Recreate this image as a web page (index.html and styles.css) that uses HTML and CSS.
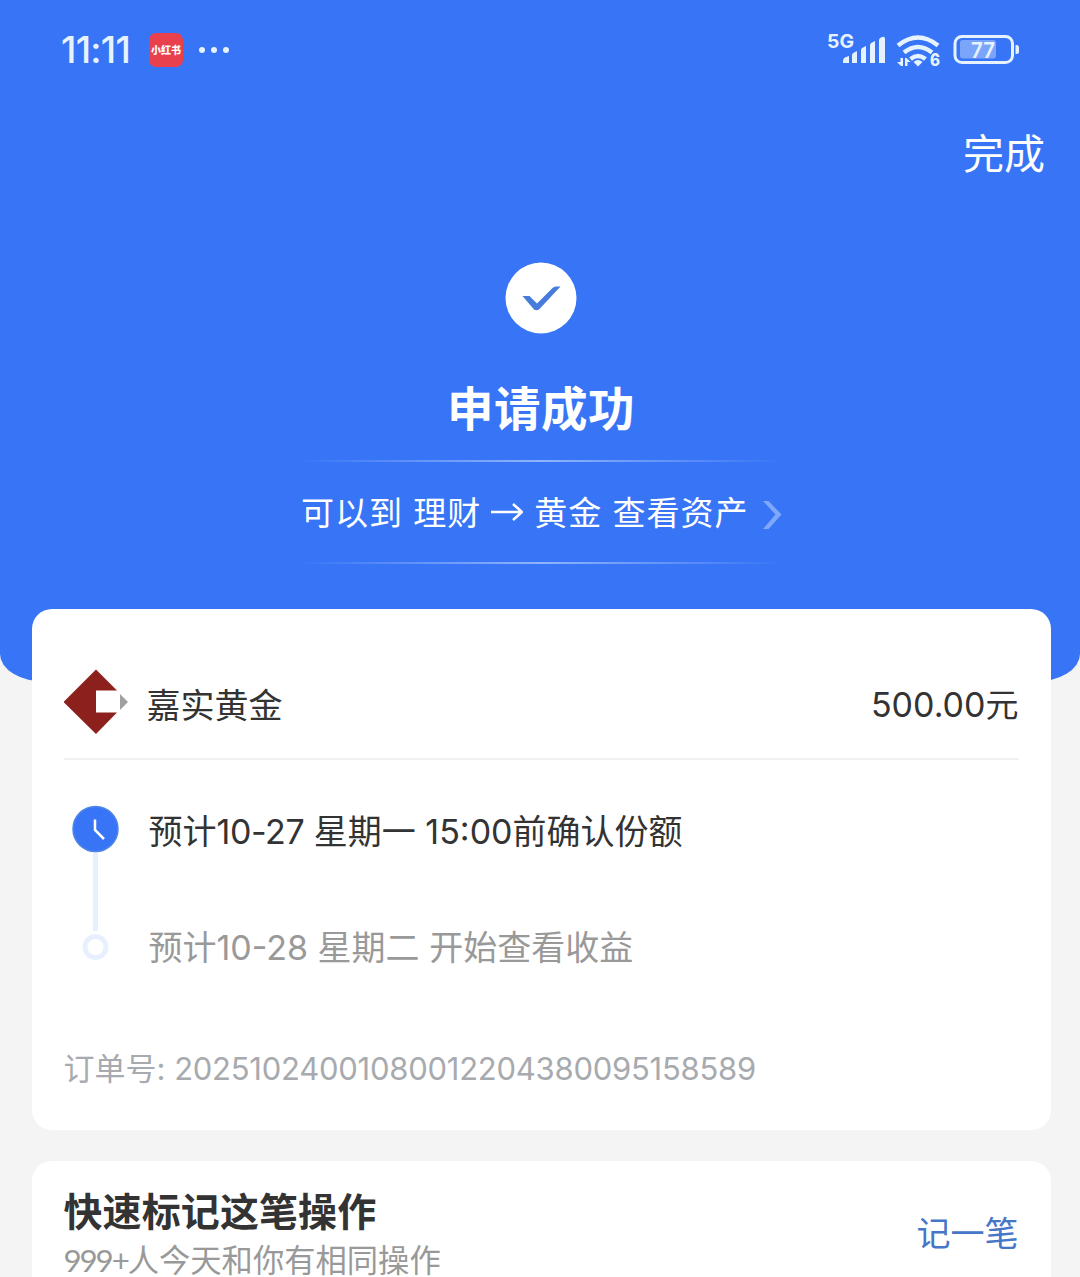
FILE: index.html
```html
<!DOCTYPE html>
<html lang="zh-CN">
<head>
  <meta charset="UTF-8" />
  <meta name="viewport" content="width=device-width, initial-scale=1.0"/>
  <title>申请成功</title>
  <link rel="stylesheet" href="styles.css">
</head>
<body>
  <div class="page">
    <header class="hero">
      <div class="status-bar">
        <div class="status-left">
          <span class="time">11:11</span>
          <span class="app-badge">小红书</span>
          <svg class="dots" width="32" height="8" viewBox="0 0 32 8">
            <circle cx="4" cy="4" r="3"/><circle cx="16" cy="4" r="3"/><circle cx="28" cy="4" r="3"/>
          </svg>
        </div>
        <svg class="status-icons" width="194" height="40" viewBox="826 30 194 40">
          <text class="net" x="827" y="48" textLength="27" lengthAdjust="spacingAndGlyphs">5G</text>
          <!-- signal -->
          <path d="M843 63v-2q0-3 3-4l3-1v7zM852 63V55q0-2 3-3l2-1v12zM861 63V50q0-2 3-3l2-1v17zM870 63V45q0-2 3-3l2-1v22zM879 63V40q0-2 3-3 3-1 3 2v24z"/>
          <!-- wifi -->
          <g class="arc">
            <path d="M898 45.500q20-16 40 0"/>
            <path d="M904 52.500q14-11 28 0"/>
            <path d="M910.500 59q7.500-6 15 0"/>
          </g>
          <path d="M913.500 62q4.500-4 9 0l-4.500 4.500z"/>
          <path d="M900.500 58h2.500v8h-2l-4-4h3.500zM905 66v-8h1.500l4 4h-3v4z"/>
          <text class="six" x="930" y="66" textLength="10" lengthAdjust="spacingAndGlyphs">6</text>
          <!-- battery -->
          <rect class="cell" x="955" y="36.500" width="57.500" height="26" rx="7"/>
          <rect class="charge" x="960" y="40" width="36" height="18.500" rx="3"/>
          <path d="M1015.500 45h1q2.500 0 2.500 2.500v4q0 2.500-2.500 2.500h-1z"/>
          <text class="percent" x="971" y="57.500" textLength="24" lengthAdjust="spacingAndGlyphs">77</text>
        </svg>
      </div>

      <div class="nav"><a class="done">完成</a></div>

      <div class="result">
        <svg class="check" width="72" height="72" viewBox="0 0 72 72">
          <circle cx="36" cy="36" r="35.500"/>
          <path d="M17.500 34h7l7.500 7.500 15.500-15.500q1.500-1.500 3.500-1.500h4.500L34 47.500q-2.500 1.500-5 0z"/>
        </svg>
        <h1>申请成功</h1>
        <div class="guide">
          <span class="guide-text">可以到 理财</span>
          <svg class="arrow" width="32" height="20" viewBox="0 0 32 20"><path d="M0 10H31M22 2l9 8-9 8"/></svg>
          <span class="guide-text">黄金 查看资产</span>
          <svg class="chevron" width="19" height="28" viewBox="0 0 19 28"><path d="M0 0h5.500L18.500 13.500 5.500 28H0L12.500 13.500z"/></svg>
        </div>
      </div>
    </header>

    <main>
      <section class="card order">
        <div class="fund">
          <svg width="66" height="66" viewBox="1 0 66 66">
            <path fill="#8c201d" d="M33 .5 54 21.500H33v22h21L33 65 .5 33z"/>
            <path fill="#a0a0a2" d="M57 25l8 8-8 8z"/>
          </svg>
          <span class="fund-name">嘉实黄金</span>
          <span class="amount"><span class="num">500.00</span>元</span>
        </div>

        <div class="steps">
          <svg class="rail" width="48" height="156" viewBox="0 0 48 156">
            <path class="line" d="M23.500 46V126"/>
            <circle class="clock" cx="23.500" cy="24" r="22.500"/>
            <path class="hands" d="M23 14.500v10.500l9 9"/>
            <circle class="next" cx="23.500" cy="142" r="10.500"/>
          </svg>
          <div class="step-list">
            <p class="step">预计<span class="date">10-27</span> 星期一 15:00前确认份额</p>
            <p class="step pending">预计10-28 星期二 开始查看收益</p>
          </div>
        </div>

        <p class="order-no">订单号: <span class="id">20251024001080012204380095158589</span></p>
      </section>

      <section class="card mark">
        <div>
          <h2>快速标记这笔操作</h2>
          <p class="hint"><span class="count">999+</span>人今天和你有相同操作</p>
        </div>
        <a class="record">记一笔</a>
      </section>
    </main>
  </div>
</body>
</html>
```
FILE: styles.css
```css
* {
  box-sizing: border-box;
}

body {
  margin: 0;
  background: #f4f4f4;
  font-family: Inter, "Noto Sans CJK SC", sans-serif;
  color: #333;
}

h1, h2, p {
  margin: 0;
}

svg {
  display: block;
  flex: none;
}

.page {
  width: 1080px;
  height: 1277px;
  overflow: hidden;
}

.hero {
  height: 682px;
  background: #3875f6;
  color: #fff;
  border-radius: 0 0 46px 46px / 0 0 28px 28px;
}

/* status bar */
.status-bar {
  display: flex;
  justify-content: space-between;
  align-items: center;
  height: 100px;
  padding: 0 60px 0 61px;
  color: #e6f3ff;
}

.status-left {
  display: flex;
  align-items: center;
}

.time {
  width: 88px;
  font-size: 37px;
  font-weight: 500;
  line-height: 40px;
  letter-spacing: -0.7px;
}

.app-badge {
  width: 34px;
  height: 34px;
  margin-right: 15px;
  border-radius: 7px;
  background: #e9404d;
  color: #fff;
  font-size: 10px;
  font-weight: 900;
  line-height: 34px;
  text-align: center;
  white-space: nowrap;
}

.dots,
.status-icons {
  fill: #e6f3ff;
}

.net {
  font-size: 19px;
  font-weight: 700;
}

.six {
  font-size: 17px;
  font-weight: 800;
}

.percent {
  font-size: 22px;
  font-weight: 600;
}

.arc {
  fill: none;
  stroke: #e6f3ff;
  stroke-width: 4.5;
}

.cell {
  fill: none;
  stroke: #e6f3ff;
  stroke-width: 3;
}

.charge {
  fill: #7ba5fb;
}

.nav {
  display: flex;
  justify-content: flex-end;
  padding: 24px 35px 0 0;
}

.done {
  font-size: 41px;
  line-height: 60px;
}

/* result */
.result {
  display: flex;
  flex-direction: column;
  align-items: center;
  padding: 78px 0 0 2px;
}

.check {
  fill: #fff;
}

.check path {
  fill: #477bdc;
}

h1 {
  margin-top: 41px;
  font-size: 46.5px;
  font-weight: 700;
  line-height: 68px;
  letter-spacing: 0.5px;
}

.guide {
  display: flex;
  align-items: center;
  width: 480px;
  height: 104px;
  margin-top: 17px;
  background:
    linear-gradient(90deg, transparent, #8fb4fb 50%, transparent) top / 100% 2px no-repeat,
    linear-gradient(90deg, transparent, #8fb4fb 50%, transparent) bottom / 100% 2px no-repeat;
}

.guide-text {
  padding-top: 1px;
  font-size: 33px;
  line-height: 50px;
  letter-spacing: 1px;
  white-space: nowrap;
}

.arrow {
  margin: 0 11px 0 10px;
  fill: none;
  stroke: #fff;
  stroke-width: 2.5;
}

.chevron {
  margin: 6px -1px 0 auto;
  fill: #7fa8fa;
}

/* cards */
.card {
  width: 1019px;
  margin: 0 auto 31px;
  padding: 0 32px;
  border-radius: 20px;
  background: #fff;
}

main {
  margin-top: -73px;
  padding-left: 2px;
}

.order {
  height: 521px;
  padding-top: 60px;
}

.fund {
  display: flex;
  align-items: center;
  height: 91px;
  padding-bottom: 24px;
  border-bottom: 2px solid #f1f1f1;
}

.fund-name {
  margin-left: 17px;
  padding-top: 8px;
  font-size: 34px;
  line-height: 50px;
}

.amount {
  margin-left: auto;
  padding-top: 7px;
  font-size: 33px;
  line-height: 50px;
}

.num {
  font-size: 34px;
}

.steps {
  display: flex;
  padding: 45px 0 0 8px;
}

.step-list {
  padding: 2px 0 0 29px;
}

.step {
  font-size: 34px;
  line-height: 50px;
  white-space: nowrap;
}

.date {
  letter-spacing: -0.4px;
}

.pending {
  margin-top: 66px;
  color: #999;
}

.line {
  stroke: #e8f0fe;
  stroke-width: 5;
}

.clock {
  fill: #3875f6;
  stroke: #5085e6;
  stroke-width: 1.5;
}

.hands {
  fill: none;
  stroke: #fff;
  stroke-width: 2.5;
}

.next {
  fill: #fff;
  stroke: #e8f0fe;
  stroke-width: 5;
}

.order-no {
  margin-top: 71px;
  font-size: 31px;
  line-height: 50px;
  color: #a7aaae;
  white-space: nowrap;
}

.id {
  letter-spacing: -0.25px;
}

.mark {
  display: flex;
  justify-content: space-between;
  height: 160px;
  padding-top: 25px;
}

h2 {
  font-size: 39px;
  font-weight: 700;
  line-height: 52px;
  letter-spacing: 0.1px;
}

.hint {
  margin-top: 6px;
  font-size: 31.3px;
  line-height: 32px;
  color: #999;
}

.count {
  font-family: Lato, sans-serif;
  letter-spacing: -2.1px;
}

.record {
  margin-top: 23px;
  font-size: 34px;
  line-height: 50px;
  color: #4676c8;
}
```
